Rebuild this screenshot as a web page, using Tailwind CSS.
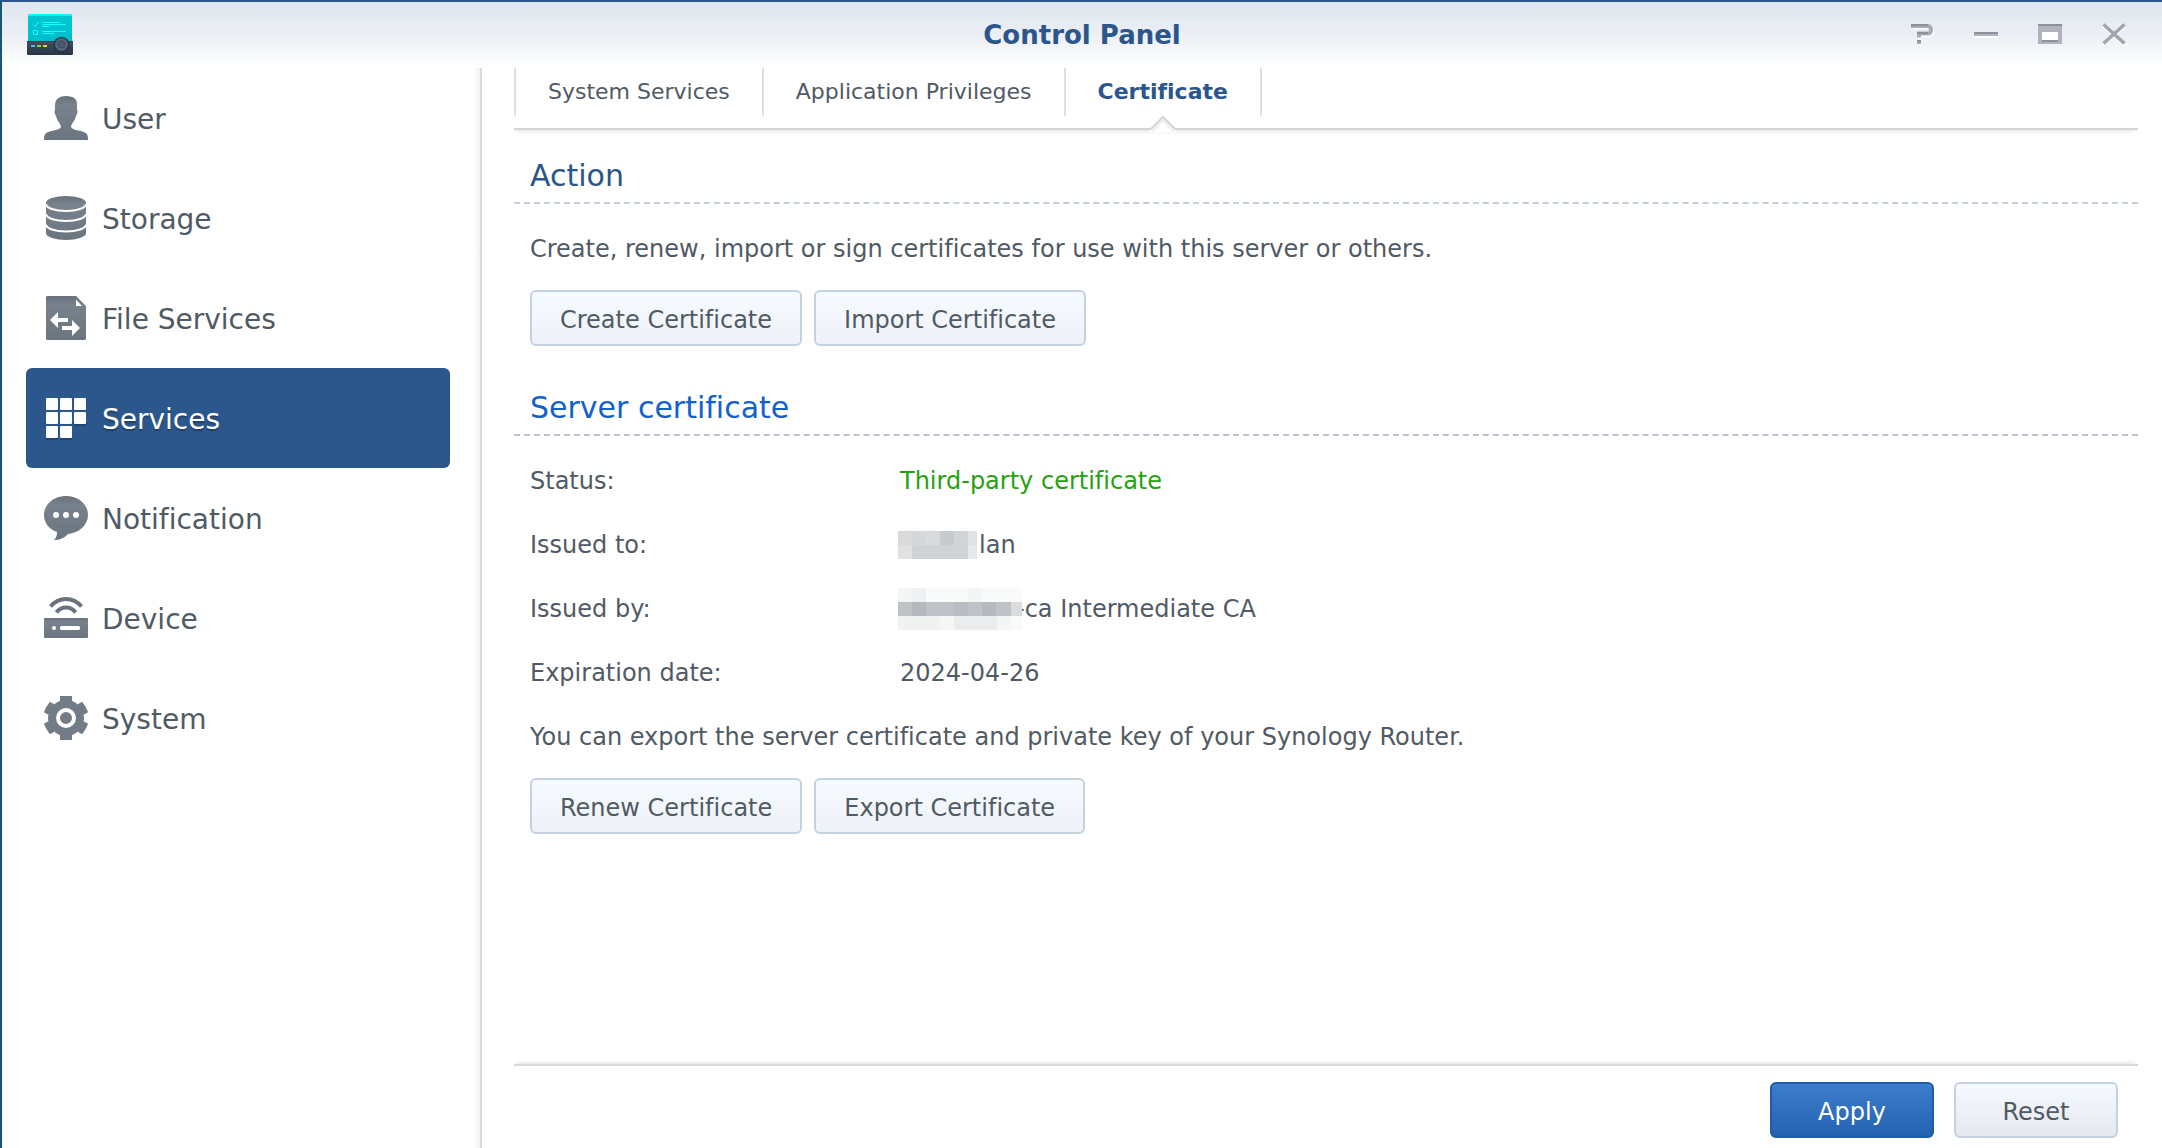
<!DOCTYPE html>
<html lang="en">
<head>
<meta charset="utf-8">
<meta name="viewport" content="width=device-width, initial-scale=1">
<title>Control Panel</title>
<script src="https://cdn.jsdelivr.net/npm/@tailwindcss/browser@4"></script>
</head>
<body class="flex min-h-screen flex-col border-t-2 border-l-2 border-t-[#2c588c] border-l-[#10597a] bg-white font-['DejaVu_Sans',Verdana,sans-serif] text-2xl text-[#505a64] [font-variant-ligatures:none]">

<svg class="absolute h-0 w-0" aria-hidden="true">
  <defs>
    <linearGradient id="ink" x1="0" y1="0" x2="0" y2="1">
      <stop offset="0" stop-color="#69727c"/><stop offset=".2" stop-color="#78828c"/><stop offset="1" stop-color="#6b7580"/>
    </linearGradient>
    <linearGradient id="screen" x1="0" y1="0" x2="0" y2="1">
      <stop offset="0" stop-color="#00c8d2"/><stop offset="1" stop-color="#00bcca"/>
    </linearGradient>
    <linearGradient id="base" x1="0" y1="0" x2="0" y2="1">
      <stop offset="0" stop-color="#414f60"/><stop offset="1" stop-color="#283546"/>
    </linearGradient>
  </defs>
</svg>

<header class="grid h-[66px] grid-cols-[1fr_auto_1fr] items-center bg-linear-to-b from-[#dfe6ee] via-[#eceff5] to-white">
  <svg class="ml-6 h-[44px] w-[48px]" viewBox="0 0 48 44" aria-hidden="true">
    <path d="M2 3Q2 1 4 1H44Q46 1 46 3V30H2Z" fill="url(#screen)"/>
    <path d="M4 1H44Q46 1 46 3H2Q2 1 4 1Z" fill="#00faff"/>
    <path d="M7 11.500l2 2 4-5M7.500 17.500h4v4h-4zM16 9.500h18M16 11.500h24M16 13.500h7M16 18.500h24M16 20.500h12" fill="none" stroke="#1ff" stroke-width="1"/>
    <path d="M1 28H47V40.500Q47 42 45.500 42H2.500Q1 42 1 40.500Z" fill="url(#base)"/>
    <path d="M1 28.500H47" stroke="#26415a"/>
    <rect x="5" y="32" width="4" height="2" fill="#5ab4f5"/><rect x="11" y="32" width="4" height="2" fill="#8cd03c"/><rect x="17" y="32" width="4" height="2" fill="#f0c840"/>
    <circle cx="35.500" cy="32" r="8" fill="#273443"/><circle cx="35.500" cy="31.500" r="6.500" fill="#566479"/><circle cx="35.500" cy="31.500" r="3.500" fill="#4c5b70" stroke="#3c4a5d"/>
  </svg>
  <h1 class="text-[26px] font-bold text-[#2b568c]">Control Panel</h1>
  <div class="flex justify-end gap-10 pr-9">
    <button class="h-6 w-6" aria-label="Help"><svg viewBox="0 0 24 24"><path d="M1 4H18Q22 4 22 8T18 12H9V16" fill="none" stroke="#fff" stroke-width="4"/><path d="M1 3H17.500Q21 3 21 7T17.500 10.500H9V14.500M9 17V21" fill="none" stroke="#a6abb5" stroke-width="4"/><path d="M1 2H18M7 10H18M7 18H11" fill="none" stroke="#8c919a" stroke-width="2"/></svg></button>
    <button class="h-6 w-6" aria-label="Minimize"><svg viewBox="0 0 24 24"><path d="M0 14H24" stroke="#fff" stroke-width="2"/><path d="M0 11H24" stroke="#b0b5bf" stroke-width="4"/><path d="M0 10H24" stroke="#8c919a" stroke-width="2"/></svg></button>
    <button class="h-6 w-6" aria-label="Maximize"><svg viewBox="0 0 24 24"><rect x="4" y="9" width="16" height="8" fill="#fff"/><path d="M0 1H24V21H0ZM4 9V17H20V9Z" fill="#aeb3bd" fill-rule="evenodd"/><path d="M0 2H24M4 18H20" stroke="#8c919a" stroke-width="2"/></svg></button>
    <button class="h-6 w-6" aria-label="Close"><svg viewBox="0 0 24 24"><path d="M1 3L23 22M23 3L1 22" stroke="#fff" stroke-width="3"/><path d="M1.500 1.500L22.500 20.500M22.500 1.500L1.500 20.500" stroke="#a0a5af" stroke-width="3.500"/></svg></button>
  </div>
</header>

<div class="flex flex-1">
  <nav class="flex w-[480px] shrink-0 flex-col border-r-2 border-[#dadada] bg-linear-to-l from-[#f1f1f1] to-white to-[6px] pr-[30px] pl-6 text-[28px]">
    <a href="#" class="flex h-[100px] items-center gap-[14px] pl-[18px]">
      <svg class="h-11 w-11" viewBox="0 0 44 44" fill="url(#ink)"><path d="M22 0C26 0 29 1 30 2C32 3 33 5 33 9V14C34 15 33.500 18 32 20C31 25 27 28 27 31C29 35 39 34 43 38Q44 40 44 44H0Q0 40 1 38C5 34 15 35 17 31C17 28 13 25 12 20C10.500 18 10 15 11 14V9C11 3 16 0 22 0Z"/></svg>
      <span class="pt-1">User</span></a>
    <a href="#" class="flex h-[100px] items-center gap-[14px] pl-[18px]">
      <svg class="h-11 w-11" viewBox="0 0 44 44"><path d="M2 7A20 7 0 0 1 42 7V37A20 7 0 0 1 2 37Z" fill="url(#ink)"/><path d="M2 8A20 7 0 0 0 42 8M2 18A20 7 0 0 0 42 18M2 28.500A20 7 0 0 0 42 28.500" fill="none" stroke="#fff" stroke-width="2"/></svg>
      <span class="pt-1">Storage</span></a>
    <a href="#" class="flex h-[100px] items-center gap-[14px] pl-[18px]">
      <svg class="h-11 w-11" viewBox="0 0 44 44"><path d="M3 0H32L42 10V43L41 44H3L2 43V1Z" fill="url(#ink)"/><path d="M32 3.500V10H38ZM14 16V22H24V26H14V32L6 24ZM28 24V30H18V34H28V40L36 32Z" fill="#fff"/></svg>
      <span class="pt-1">File Services</span></a>
    <a href="#" aria-current="page" class="flex h-[100px] items-center gap-[14px] rounded-md bg-[#2b578c] pl-[18px] text-white text-shadow-[0_2px_1px_#0004]">
      <svg class="h-11 w-11" viewBox="0 0 44 44"><g fill="#204574"><rect x="30" y="18" width="12" height="12" rx="1"/><rect x="2" y="32" width="12" height="12" rx="1"/><rect x="16" y="32" width="12" height="12" rx="1"/></g><g fill="#fff"><rect x="2" y="2" width="12" height="12" rx="1"/><rect x="16" y="2" width="12" height="12" rx="1"/><rect x="30" y="2" width="12" height="12" rx="1"/><rect x="2" y="16" width="12" height="12" rx="1"/><rect x="16" y="16" width="12" height="12" rx="1"/><rect x="30" y="16" width="12" height="12" rx="1"/><rect x="2" y="30" width="12" height="12" rx="1"/><rect x="16" y="30" width="12" height="12" rx="1"/></g></svg>
      <span class="pt-1">Services</span></a>
    <a href="#" class="flex h-[100px] items-center gap-[14px] pl-[18px]">
      <svg class="h-11 w-11" viewBox="0 0 44 44"><path d="M22 0C34 0 44 8 44 19C44 29 35 37 24 38C20 42 16 44 10 44C12 42 13 40 13 36C5 33 0 27 0 19C0 8 10 0 22 0Z" fill="url(#ink)"/><g fill="#fff"><circle cx="12" cy="19" r="3"/><circle cx="22" cy="19" r="3"/><circle cx="32" cy="19" r="3"/></g></svg>
      <span class="pt-1">Notification</span></a>
    <a href="#" class="flex h-[100px] items-center gap-[14px] pl-[18px]">
      <svg class="h-11 w-11" viewBox="0 0 44 44"><path d="M6.500 10.500Q13 3 22 3T37.500 10.500M12.500 16.500Q16 11.500 22 11.500T31.500 16.500" fill="none" stroke="#6a737d" stroke-width="4"/><rect y="22" width="44" height="20" rx="1" fill="url(#ink)"/><circle cx="10" cy="32" r="2" fill="#fff"/><rect x="16" y="30" width="20" height="4" rx="1.500" fill="#fff"/></svg>
      <span class="pt-1">Device</span></a>
    <a href="#" class="flex h-[100px] items-center gap-[14px] pl-[18px]">
      <svg class="h-11 w-11" viewBox="0 0 44 44"><g fill="#727c86"><circle cx="22" cy="22" r="18"/><path d="M16 0Q22 -1 28 0V5H16ZM16 44Q22 45 28 44V39H16Z"/><path d="M16 0Q22 -1 28 0V5H16ZM16 44Q22 45 28 44V39H16Z" transform="rotate(60 22 22)"/><path d="M16 0Q22 -1 28 0V5H16ZM16 44Q22 45 28 44V39H16Z" transform="rotate(120 22 22)"/></g><circle cx="22" cy="22" r="8" fill="none" stroke="#fff" stroke-width="4"/></svg>
      <span class="pt-1">System</span></a>
  </nav>

  <main class="flex min-w-0 flex-1 flex-col pr-6 pl-8">
    <div role="tablist" class="flex h-[62px] items-start border-b-2 border-[#d4d4d4] text-[22px] shadow-[0_4px_4px_-3px_#0002]">
      <button role="tab" class="h-12 border-l-2 border-[#d6e1ec] px-8">System Services</button>
      <button role="tab" class="h-12 border-l-2 border-[#d6e1ec] px-8">Application Privileges</button>
      <button role="tab" aria-selected="true" class="relative h-12 border-x-2 border-[#d6e1ec] px-8 font-bold text-[#2b568c]">Certificate
        <svg class="absolute top-12 left-1/2 h-4 w-[26px] -translate-x-1/2" viewBox="0 0 26 16" aria-hidden="true"><path d="M0 14L13 0L26 14V16H0Z" fill="#fff"/><path d="M2 16L13 4L24 16" fill="none" stroke="#eee" stroke-width="2"/><path d="M0 13H1L13 1L25 13H26" fill="none" stroke="#d4d4d4" stroke-width="2"/></svg>
      </button>
    </div>

    <section>
      <h2 class="flex h-[74px] items-end border-b-2 border-dashed border-[#c4cedb] px-4 pb-1.5 text-[30px] text-[#2b568c]">Action</h2>
      <div class="px-4 pt-[29px]">
        <p class="leading-8">Create, renew, import or sign certificates for use with this server or others.</p>
        <div class="flex gap-3 pt-[25px]">
          <button class="h-14 rounded-md border-2 border-[#c6d2df] bg-linear-to-b from-[#f6fbff] to-[#eef2f8] px-7 pt-1">Create Certificate</button>
          <button class="h-14 rounded-md border-2 border-[#c6d2df] bg-linear-to-b from-[#f6fbff] to-[#eef2f8] px-7 pt-1">Import Certificate</button>
        </div>
      </div>
    </section>

    <section>
      <h2 class="flex h-[90px] items-end border-b-2 border-dashed border-[#b9c2ce] px-4 pb-1.5 text-[30px] text-[#1161cc]">Server certificate</h2>
      <div class="px-4 pt-[13px]">
        <dl class="grid grid-cols-[370px_1fr] auto-rows-[64px] items-center">
          <dt>Status:</dt><dd class="text-[#26a10f]">Third-party certificate</dd>
          <dt>Issued to:</dt>
          <dd class="flex items-center gap-[2px]">
            <svg class="-ml-[2px] h-7 w-[79px]" viewBox="0 0 79 28" shape-rendering="crispEdges" role="img" aria-label="Hidden"><path fill="#d9dadc" d="M0 0h79v28H0z"/><path fill="#d5d7d9" d="M14 0h14v14H14z"/><path fill="#c8cbce" d="M42 0h14v14H42z"/><path fill="#d1d5d8" d="M56 0h14v14H56z"/><path fill="#dfe1e3" d="M70 0h9v14h-9zM0 14h14v14H0z"/><path fill="#cfd3d6" d="M14 14h28v14H14zM56 14h14v14H56z"/><path fill="#d1d2d5" d="M42 14h14v14H42z"/><path fill="#e5e7e9" d="M70 14h9v14h-9z"/></svg>
            <span>lan</span>
          </dd>
          <dt>Issued by:</dt>
          <dd class="flex items-center">
            <svg class="z-10 -ml-[2px] h-[42px] w-[124px] shrink-0" viewBox="0 0 124 42" shape-rendering="crispEdges" role="img" aria-label="Hidden"><path fill="#f9fafa" d="M0 0h124v14H0z"/><path fill="#f4f5f5" d="M0 0h14v14H0zM70 0h14v14H70z"/><path fill="#eff1f4" d="M14 0h14v14H14z"/><path fill="#bfc3c7" d="M0 14h124v14H0z"/><path fill="#b5b9be" d="M14 14h14v14H14zM84 14h14v14H84z"/><path fill="#b9bdc3" d="M56 14h14v14H56z"/><path fill="#dadcde" d="M113 14h11v14h-11z"/><path fill="#f0f1f1" d="M0 28h42v14H0z"/><path fill="#f6f6f6" d="M42 28h14v14H42z"/><path fill="#ebecee" d="M56 28h43v14H56z"/><path fill="#f4f6f5" d="M99 28h14v14H99z"/><path fill="#fafafa" d="M113 28h11v14h-11z"/></svg>
            <span class="-ml-1.5">-ca Intermediate CA</span>
          </dd>
          <dt>Expiration date:</dt><dd>2024-04-26</dd>
        </dl>
        <p class="pt-4 leading-8">You can export the server certificate and private key of your Synology Router.</p>
        <div class="flex gap-3 pt-[25px]">
          <button class="h-14 rounded-md border-2 border-[#c6d2df] bg-linear-to-b from-[#f6fbff] to-[#eef2f8] px-7 pt-1">Renew Certificate</button>
          <button class="h-14 rounded-md border-2 border-[#c6d2df] bg-linear-to-b from-[#f6fbff] to-[#eef2f8] px-7 pt-1">Export Certificate</button>
        </div>
      </div>
    </section>

    <footer class="mt-auto flex justify-end gap-5 border-t-2 border-[#dadada] px-5 pt-4 pb-[10px] shadow-[0_-4px_4px_-3px_#0002]">
      <button class="h-14 w-[164px] rounded-md border-2 border-[#205ca8] bg-linear-to-b from-[#3c7dcd] to-[#2463b0] pt-1 text-white">Apply</button>
      <button class="h-14 w-[164px] rounded-md border-2 border-[#c6d2df] bg-linear-to-b from-[#f5faff] to-[#e5e9ef] pt-1">Reset</button>
    </footer>
  </main>
</div>
</body>
</html>
